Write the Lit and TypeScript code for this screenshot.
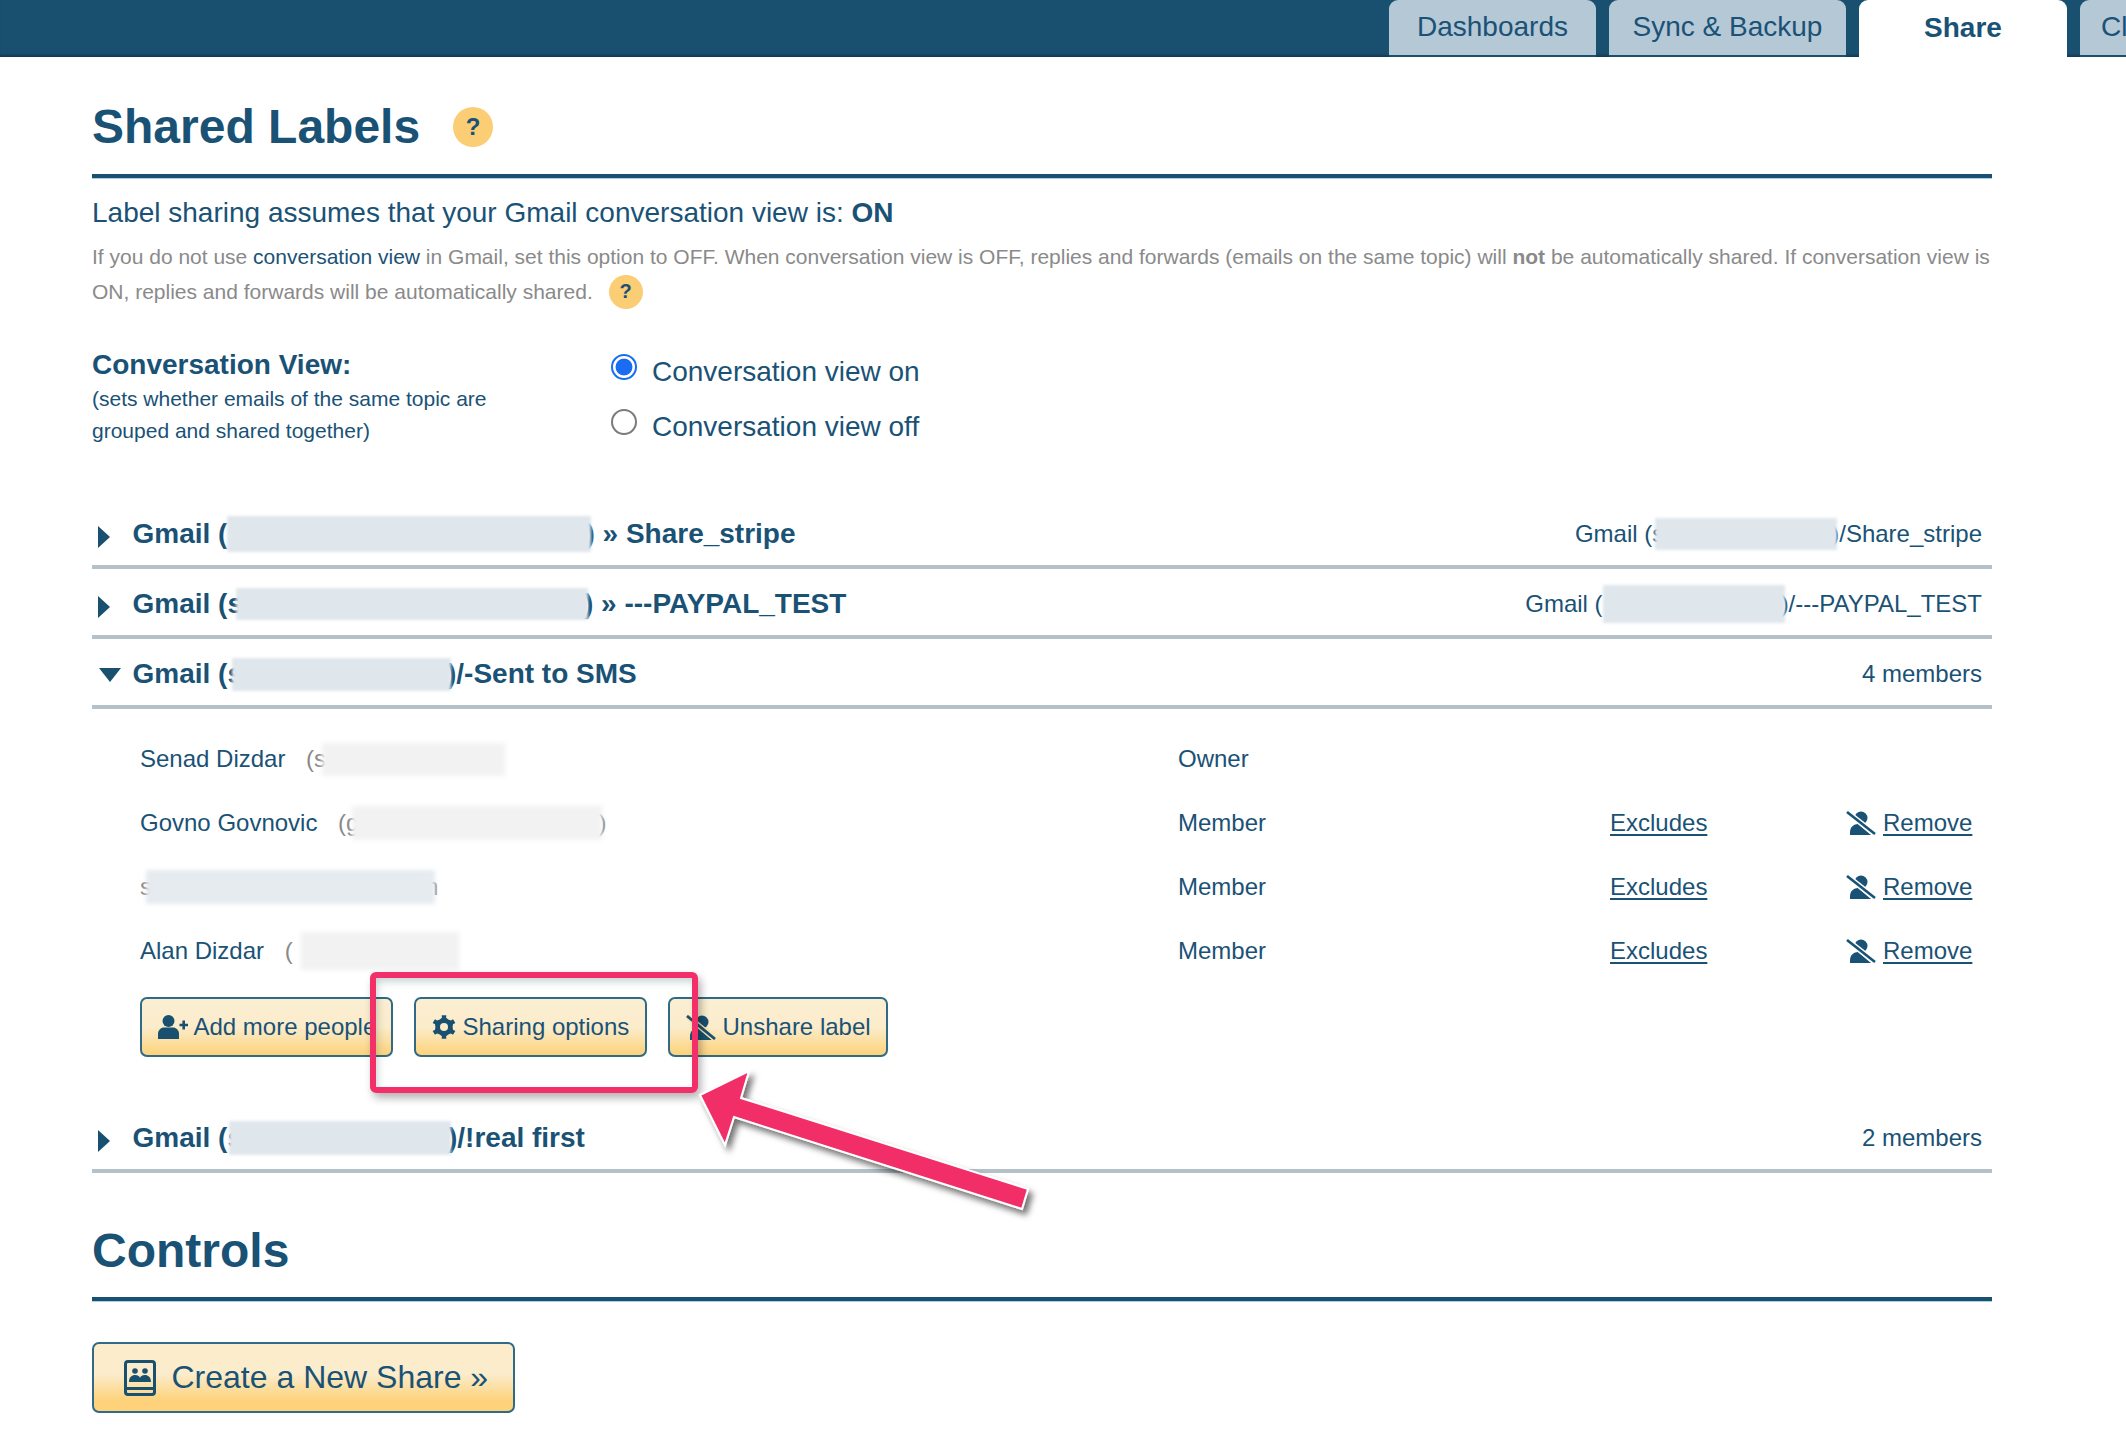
import { LitElement, html, css, svg } from "lit";
import { customElement } from "lit/decorators.js";

const Q = html`<span class="q">?</span>`;

function gearPath(): string {
  const cx = 12, cy = 12;
  const pts: string[] = [];
  for (let i = 0; i < 6; i++) {
    const a = (i * 60 - 90) * Math.PI / 180;
    const seq: [number, number][] = [[-30, 8.6], [-13, 9.4], [-11, 12], [11, 12], [13, 9.4]];
    for (const [d, r] of seq) {
      const t = a + d * Math.PI / 180;
      pts.push(`${(cx + r * Math.cos(t)).toFixed(2)} ${(cy + r * Math.sin(t)).toFixed(2)}`);
    }
  }
  return `M${pts.join("L")}zM12 8a4 4 0 100 8 4 4 0 000-8z`;
}

const personX = html`<svg class="ix" viewBox="0 0 30 24"><circle cx="15" cy="7" r="6.5" fill="currentColor"/><path d="M4 24v-3c0-5 4-8 8-8l13 11z" fill="currentColor"/><path d="M1 1l28 22" stroke="#fff" stroke-width="5.500"/><path d="M1 1l28 22" stroke="currentColor" stroke-width="2.600"/></svg>`;

@customElement("app-root")
export class AppRoot extends LitElement {
  static styles = css`
    :host { display: block; position: relative; width: 2126px; height: 1444px; overflow: hidden; background: #fff; font-family: "Liberation Sans", Arial, sans-serif; color: #1a5276; }
    .top { height: 57px; background: #19506f; box-shadow: inset 0 -3px 2px -1px #123c54; display: flex; justify-content: flex-end; gap: 13px; overflow: hidden; margin-right: -60px; }
    .tab { height: 57px; box-sizing: border-box; background: #b5c8d6; border-bottom: 2px solid #19506f; border-radius: 9px 9px 0 0; display: flex; align-items: center; justify-content: center; font-size: 28px; padding-bottom: 2px; flex: none; }
    .tab.on { background: #fff; border-bottom: 0; font-weight: 700; }
    .tab.next { justify-content: flex-start; padding-left: 21px; }
    .main { padding: 0 134px 0 92px; }
    h1 { margin: 0; font-size: 48px; line-height: 56px; font-weight: 700; display: flex; align-items: center; }
    .h1a { padding-top: 42px; height: 75px; border-bottom: 4px solid #19506f; box-shadow: 0 1px 0 #a8d0e6; }
    .q { display: inline-flex; align-items: center; justify-content: center; border-radius: 50%; background: #fbcd74; font-weight: 700; color: #1a5276; }
    h1 .q { width: 40px; height: 40px; font-size: 24px; margin-left: 33px; }
    .lead { font-size: 28px; line-height: 34px; margin-top: 18px; }
    .para { font-size: 21px; line-height: 35px; color: #8a8a8a; margin-top: 9px; }
    .para a { color: #1a5276; }
    .para .q { width: 34px; height: 34px; font-size: 20px; margin-left: 10px; margin-top: -3px; vertical-align: middle; }
    .cv { display: flex; margin-top: 39px; height: 151px; }
    .cv-l { width: 519px; flex: none; }
    .cv-l b { display: block; font-size: 28px; line-height: 34px; }
    .cv-l p { margin: 1px 0 0; font-size: 21px; line-height: 32px; }
    .radios { display: flex; flex-direction: column; gap: 23px; padding-top: 8px; }
    .radio { display: flex; align-items: center; gap: 15px; font-size: 28px; line-height: 32px; }
    .rd { width: 26px; height: 26px; box-sizing: border-box; border-radius: 50%; border: 2px solid #7b7b7b; margin-top: -10px; background: #fff; }
    .rd.on { border: 2px solid #1a6cf0; background: radial-gradient(circle, #1a6cf0 0 8px, #fff 8.8px); }
    .row { display: flex; align-items: center; height: 70px; box-sizing: border-box; border-bottom: 4px solid #b4c1c8; padding: 4px 0 0 40.5px; font-size: 28px; font-weight: 700; position: relative; white-space: pre; }
    .row .end { margin-left: auto; font-weight: 400; font-size: 24px; padding-right: 10px; display: flex; align-items: center; }
    .row.last { margin-top: 46px; }
    .tri { position: absolute; left: 6px; top: 50%; margin-top: -6px; width: 0; height: 0; border-style: solid; border-width: 11px 0 11px 12px; border-color: transparent transparent transparent #19506f; }
    .tri.open { left: 7px; margin-top: -4px; border-width: 14px 11px 0 11px; border-color: #19506f transparent transparent transparent; }
    .rd1 { display: inline-block; background: #dfe6ec; filter: blur(1.5px); flex: none; }
    .rd2 { display: inline-block; background: #f2f2f3; filter: blur(2px); flex: none; }
    .rd3 { display: inline-block; background: #e6ebf0; filter: blur(2px); flex: none; }
    .members { padding: 18px 0 0 48px; }
    .m { display: flex; align-items: center; height: 64px; font-size: 24px; }
    .m .n { width: 1038px; flex: none; display: flex; align-items: center; white-space: pre; }
    .m .r { width: 432px; flex: none; }
    .m a { color: #1a5276; text-decoration: underline; text-decoration-thickness: 2px; text-underline-offset: 3px; }
    .m .ex { width: 236px; flex: none; }
    .g { color: #8a8a8a; }
    .m .g.p { margin-left: 14px; }
    .m .g.close { margin-left: -4px; }
    .m .g.tailn { margin-left: -10px; }
    .rm { display: inline-flex; align-items: center; gap: 7px; }
    .ix { width: 30px; height: 24px; }
    .btns { display: flex; gap: 21px; margin-top: 14px; }
    .btn { height: 60px; box-sizing: border-box; border: 2.5px solid #2f6a86; border-radius: 7px; background: linear-gradient(#fbeed2 0, #fbeccb 50%, #fdd27a 100%); display: flex; align-items: center; padding-left: 15.5px; font-size: 24px; flex: none; white-space: nowrap; }
    .btn svg { flex: none; }
    .ctrlh { height: 128px; box-sizing: border-box; padding-top: 50px; border-bottom: 4px solid #19506f; box-shadow: 0 1px 0 #a8d0e6; }
    .big { margin-top: 41px; width: 423px; height: 71px; box-sizing: border-box; border: 2.5px solid #2f6a86; border-radius: 7px; background: linear-gradient(#fceccb 0, #fbeccb 45%, #fdd27a 85%); display: flex; align-items: center; padding-left: 29.5px; gap: 16px; font-size: 32px; }
    .anno { position: absolute; left: 0; top: 0; width: 2126px; height: 1444px; pointer-events: none; }
    .box { position: absolute; left: 370px; top: 972px; width: 328px; height: 121px; box-sizing: border-box; border: 6px solid #f22f68; border-radius: 6px; box-shadow: 3px 5px 8px rgba(0,0,0,.3), inset 3px 5px 8px -2px rgba(0,60,60,.25); }
    .arrow { position: absolute; left: 0; top: 0; }
  `;

  private tab(label: string, w: number, cls = "") {
    return html`<div class="tab ${cls}" style="width:${w}px">${label}</div>`;
  }

  private blur(kind: string, w: number, h: number, ml = 0) {
    return html`<span class=${kind} style="width:${w}px;height:${h}px;margin-left:${ml}px"></span>`;
  }

  private tail(text: string, ml: number) {
    return html`<span style="margin-left:${ml}px">${text}</span>`;
  }

  private member(name: unknown, role: string, links: boolean) {
    return html`<div class="m">
      <div class="n">${name}</div>
      <div class="r">${role}</div>
      ${links
        ? html`<a class="ex" href="#">Excludes</a>
            <span class="rm">${personX}<a href="#">Remove</a></span>`
        : ""}
    </div>`;
  }

  render() {
    return html`
      <div class="top">
        ${this.tab("Dashboards", 207)}
        ${this.tab("Sync & Backup", 237)}
        ${this.tab("Share", 208, "on")}
        ${this.tab("Cl", 106, "next")}
      </div>
      <div class="main">
        <div class="h1a">
          <h1>Shared Labels ${Q}</h1>
        </div>
        <div class="lead">Label sharing assumes that your Gmail conversation view is: <b>ON</b></div>
        <div class="para">If you do not use <a>conversation view</a> in Gmail, set this option to OFF. When conversation view is OFF, replies and forwards (emails on the same topic) will <b>not</b> be automatically shared. If conversation view is ON, replies and forwards will be automatically shared. ${Q}</div>
        <div class="cv">
          <div class="cv-l">
            <b>Conversation View:</b>
            <p>(sets whether emails of the same topic are<br />grouped and shared together)</p>
          </div>
          <div class="radios">
            <div class="radio"><span class="rd on"></span>Conversation view on</div>
            <div class="radio"><span class="rd"></span>Conversation view off</div>
          </div>
        </div>
        <div class="row">
          <span class="tri"></span><span>Gmail (</span>${this.blur("rd1", 364, 36)}${this.tail(") » Share_stripe", -6)}
          <span class="end"><span>Gmail (s</span>${this.blur("rd1", 182, 32, -9)}${this.tail(")/Share_stripe", -6)}</span>
        </div>
        <div class="row">
          <span class="tri"></span><span>Gmail (s</span>${this.blur("rd1", 352, 32, -7)}${this.tail(") » ---PAYPAL_TEST", -4)}
          <span class="end"><span>Gmail (</span>${this.blur("rd1", 182, 38)}${this.tail(")/---PAYPAL_TEST", -4)}</span>
        </div>
        <div class="row">
          <span class="tri open"></span><span>Gmail (s</span>${this.blur("rd1", 219, 33, -11)}${this.tail(")/-Sent to SMS", -4)}
          <span class="end">4 members</span>
        </div>
        <div class="members">
          ${this.member(html`<span>Senad Dizdar</span><span class="g p"> (s</span>${this.blur("rd2", 183, 33, -4)}`, "Owner", false)}
          ${this.member(html`<span>Govno Govnovic</span><span class="g p"> (g</span>${this.blur("rd2", 250, 34, -7)}<span class="g close">)</span>`, "Member", true)}
          ${this.member(html`<span class="g">s</span>${this.blur("rd3", 289, 34, -6)}<span class="g tailn">n</span>`, "Member", true)}
          ${this.member(html`<span>Alan Dizdar</span><span class="g p"> (</span>${this.blur("rd2", 158, 38, 8)}`, "Member", true)}
          <div class="btns">
            <div class="btn" style="width:253px;gap:6px">
              <svg width="30" height="24" viewBox="0 0 30 24" fill="#19506f"><circle cx="10.500" cy="6" r="6"/><path d="M0 24v-5c0-4 3-6.500 6-6.500h9c3 0 6 2.500 6 6.500v5z" /><path d="M21.500 8.700h2.900V5.500h2.600v3.200h3v2.600h-3v3.200h-2.600v-3.200h-2.900z"/></svg>
              Add more people
            </div>
            <div class="btn" style="width:233px;gap:7px">
              <svg width="24" height="24" viewBox="0 0 24 24" fill="#19506f" fill-rule="evenodd"><path d=${gearPath()} /></svg>
              Sharing options
            </div>
            <div class="btn" style="width:220px;gap:7px">
              <svg width="30" height="25" viewBox="0 0 30 25" fill="#19506f"><circle cx="16" cy="7" r="6.500"/><path d="M4 25v-4c0-5 4-8 8-8l14 12z"/><path d="M1 1l28 23" stroke="#fbe3ae" stroke-width="5.500"/><path d="M1 1l28 23" stroke="#19506f" stroke-width="2.800"/></svg>
              Unshare label
            </div>
          </div>
        </div>
        <div class="row last">
          <span class="tri"></span><span>Gmail (s</span>${this.blur("rd1", 222, 34, -14)}${this.tail(")/!real first", -3)}
          <span class="end">2 members</span>
        </div>
        <div class="ctrlh"><h1>Controls</h1></div>
        <div class="big">
          <svg width="32" height="36" viewBox="0 0 32 36"><rect x="1.500" y="1.500" width="29" height="33" rx="2.500" fill="none" stroke="#19506f" stroke-width="3"/><path d="M2 27h28v3H2z" fill="#19506f"/><circle cx="11" cy="11" r="2.800" fill="#19506f"/><circle cx="21" cy="11" r="2.800" fill="#19506f"/><path d="M5 22c0-5 3-7 6-7s5 1.500 5 3c0-1.500 2-3 5-3s6 2 6 7z" fill="#19506f"/></svg>
          Create a New Share »
        </div>
      </div>
      <div class="anno">
        <div class="box"></div>
        <svg class="arrow" width="2126" height="1444">
          <defs><filter id="s" x="-20%" y="-20%" width="140%" height="140%"><feDropShadow dx="4" dy="5" stdDeviation="3" flood-color="#000" flood-opacity=".55"/></filter></defs>
          ${svg`<path filter="url(#s)" d="M700 1095L749 1071 741 1098 1028 1189 1022 1209 734 1117 725 1145z" fill="#f22f68" stroke="#fff" stroke-width="2"/>`}
        </svg>
      </div>
    `;
  }
}
